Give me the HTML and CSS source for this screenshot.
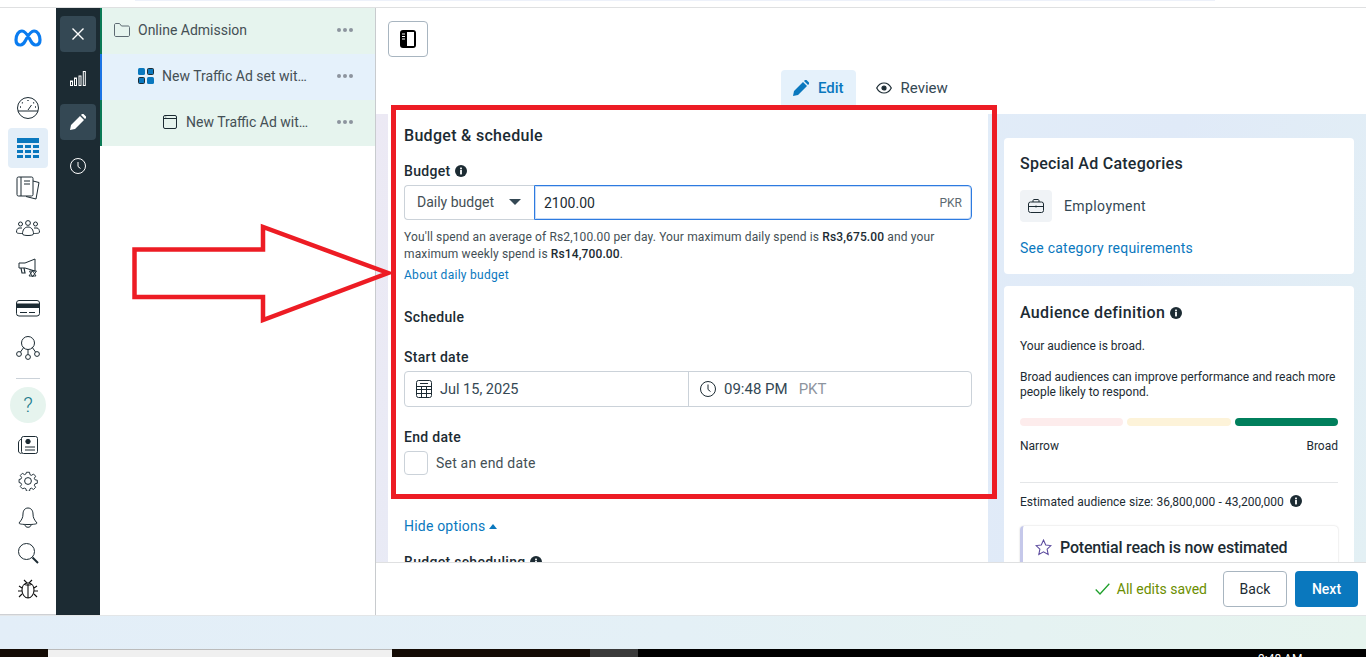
FILE: index.html
```html
<!DOCTYPE html>
<html>
<head>
<meta charset="UTF-8">
<title>Ads Manager - Edit</title>
<link rel="stylesheet" href="styles.css">
</head>
<body>
<svg class="sprite" width="0" height="0">
    <symbol id="info" viewBox="0 0 12 12">
        <circle cx="6" cy="6" r="6" fill="#1c2b33"/>
        <rect x="5.1" y="5" width="1.8" height="4.4" fill="#fff"/>
        <rect x="5.1" y="2.6" width="1.8" height="1.7" fill="#fff"/>
    </symbol>
</svg>

<div class="topline"></div>

<div class="app">
    <nav class="rail">
        <svg class="logo" width="28" height="18" viewBox="0 0 28 18" fill="none"><path d="M2 11C2 6 4.500 2 8 2c4 0 6.500 6 8.500 9.500C18 14.500 19.500 16 21.500 16 24.500 16 26 14 26 11 26 6 23.500 2 20 2c-4 0-6.500 6-8.500 9.500C10 14.500 8.500 16 6.500 16 3.500 16 2 14 2 11Z" stroke="#0a7cf0" stroke-width="3.200"/></svg>
        <div class="rail-slot">
            <svg width="24" height="24" viewBox="0 0 24 24" fill="none" stroke="#1c2b33" stroke-width="1"><circle cx="12" cy="12" r="10.500"/><path d="M2 15h20M12 14l3.500-5"/><path d="M12 4v1M6 6.500l.7.7M18 6.500l-.7.7M4 11h1M19 11h1" stroke-width="1.300"/></svg>
        </div>
        <div class="rail-slot rail-active">
            <svg width="24" height="21" viewBox="0 0 24 21" fill="#0a78be"><rect width="22" height="5" x="1"/><rect y="7" x="1" width="6" height="3"/><rect y="7" x="9" width="6" height="3"/><rect y="7" x="17" width="6" height="3"/><rect y="12" x="1" width="6" height="3"/><rect y="12" x="9" width="6" height="3"/><rect y="12" x="17" width="6" height="3"/><rect y="17" x="1" width="6" height="3"/><rect y="17" x="9" width="6" height="3"/><rect y="17" x="17" width="6" height="3"/></svg>
        </div>
        <div class="rail-slot">
            <svg width="24" height="24" viewBox="0 0 24 24" fill="none" stroke="#1c2b33" stroke-width="1"><rect x="1" y="1" width="16" height="19" rx="1.500" fill="#fff"/><path d="M5 1v19M8 5h6M8 8h6"/><path d="M17 5l6 1.500-3 16.500-10-2.500"/></svg>
        </div>
        <div class="rail-slot">
            <svg width="24" height="16" viewBox="0 0 24 16" fill="none" stroke="#1c2b33" stroke-width="1"><circle cx="12" cy="3" r="2.400"/><circle cx="4.500" cy="4" r="2"/><circle cx="19.500" cy="4" r="2"/><path d="M6.500 14c0-4 2-7 5.500-7s5.500 3 5.500 7c0 2-11 2-11 0Z"/><path d="M6 8H3c-1.500 0-2.500 2-2.500 4 0 1.500 3 1.500 6 1.500M18 8h3c1.500 0 2.500 2 2.500 4 0 1.500-3 1.500-6 1.500"/></svg>
        </div>
        <div class="rail-slot">
            <svg width="20" height="20" viewBox="0 0 20 20" fill="none" stroke="#1c2b33" stroke-width="1"><path d="M17 1v12L7 10H1V5h6Z"/><path d="M3 10l1 5h3l-1-5" stroke-width="1.200"/><path d="M14 12l4 6h-7l4-6M14.500 19l4-6h-7l3 6" stroke-width=".9"/></svg>
        </div>
        <div class="rail-slot">
            <svg width="24" height="17" viewBox="0 0 24 17" fill="none" stroke="#1c2b33" stroke-width="1"><rect x=".5" y=".5" width="23" height="15.500" rx="2.500"/><rect x=".5" y="4" width="23" height="3.500" fill="#1c2b33"/><path d="M4 12.500h7M13 12.500h6"/></svg>
        </div>
        <div class="rail-slot">
            <svg width="24" height="24" viewBox="0 0 24 24" fill="none" stroke="#1c2b33" stroke-width="1"><circle cx="12" cy="7" r="6.500"/><path d="M12 13.500v5M8 11l-3.500 5M16 11l3.500 5"/><circle cx="3" cy="18" r="2.400"/><circle cx="12" cy="21" r="2.400"/><circle cx="21" cy="18" r="2.400"/></svg>
        </div>
        <hr class="rail-rule">
        <div class="rail-help">?</div>
        <div class="rail-tool rail-tool-first">
            <svg width="20" height="18" viewBox="0 0 20 18" fill="none" stroke="#1c2b33" stroke-width="1"><rect x="3.500" y=".5" width="16" height="17" rx="2"/><circle cx="10" cy="5.500" r="2.200" fill="#1c2b33"/><path d="M7 11h10M7 14h10M3.500 3C1.500 4 .5 5 .5 7v8c0 1.500 1.500 2.500 3 2.500"/></svg>
        </div>
        <div class="rail-tool">
            <svg width="20" height="20" viewBox="0 0 20 20" fill="none" stroke="#1c2b33" stroke-width="1"><circle cx="10" cy="10" r="3.400"/><path d="M8.400 .7h3.200l.5 2.600 1.500.7 2.300-1.400 2.200 2.300-1.400 2.200.7 1.600 2.500.5v3.200l-2.500.6-.7 1.500 1.400 2.200-2.200 2.300-2.300-1.400-1.500.7-.5 2.600H8.400l-.6-2.600-1.500-.7L4 18.200l-2.200-2.300 1.400-2.200-.7-1.500-2-.6V8.400l2-.5.700-1.600-1.400-2.200L4 1.800l2.300 1.400 1.500-.7Z" transform="translate(.6 .6) scale(.94)"/></svg>
        </div>
        <div class="rail-tool">
            <svg width="20" height="21" viewBox="0 0 20 21" fill="none" stroke="#1c2b33" stroke-width="1"><path d="M10 1c-3.500 0-5 3-5 6 0 4-1.500 6-4 9 0 1 3 1.500 9 1.500s9-.5 9-1.500c-2.500-3-4-5-4-9 0-3-1.500-6-5-6Z"/><path d="M7 18c0 3 6 3 6 0"/></svg>
        </div>
        <div class="rail-tool">
            <svg width="21" height="21" viewBox="0 0 21 21" fill="none" stroke="#1c2b33" stroke-width="1"><circle cx="8.500" cy="8.500" r="8"/><path d="M14.500 14.500l5.500 5.500" stroke-width="2"/></svg>
        </div>
        <div class="rail-tool">
            <svg width="20" height="20" viewBox="0 0 20 20" fill="none" stroke="#111" stroke-width="1.100"><path d="M10 4c-4 0-6 3-6 7s2.500 8 6 8 6-4 6-8-2-7-6-7ZM10 5v14M6 5c1 1.500 7 1.500 8 0M6 1l3 3M14 1l-3 3M1 7l3 2M19 7l-3 2M0 12h4M20 12h-4M1 18l3-3M19 18l-3-3"/></svg>
        </div>
    </nav>

    <div class="steps">
        <div class="step-btn step-on">
            <svg width="14" height="14" viewBox="0 0 14 14" stroke="#fff" stroke-width="1.400"><path d="M1.500 1.500l11 11M12.500 1.500l-11 11"/></svg>
        </div>
        <div class="step-btn">
            <svg width="16" height="15" viewBox="0 0 16 15" fill="none" stroke="#fff" stroke-width="1"><rect x=".5" y="10" width="2" height="4.500"/><rect x="4.500" y="7" width="2" height="7.500"/><rect x="9" y="5" width="2" height="9.500"/><rect x="13.300" y=".5" width="2" height="14"/></svg>
        </div>
        <div class="step-btn step-on">
            <svg width="16" height="16" viewBox="0 0 16 16" fill="#fff"><path d="M0 16l1-5L10 2l4 4-9 9ZM11 1l1-1c.5-.4 1-.4 1.500 0l2.500 2.500c.4.500.4 1 0 1.500l-1 1Z"/></svg>
        </div>
        <div class="step-btn">
            <svg width="16" height="16" viewBox="0 0 16 16" fill="none" stroke="#fff" stroke-width="1"><circle cx="8" cy="8" r="7.500"/><path d="M8 4v4.500l2.500 2"/></svg>
        </div>
    </div>

    <aside class="tree">
        <div class="tree-row row-campaign">
            <svg width="16" height="14" viewBox="0 0 16 14" fill="none" stroke="#5d6a72" stroke-width="1"><path d="M.5 12V2c0-1 .5-1.500 1.500-1.500h3.500L7.500 3H14c1 0 1.500.5 1.500 1.500V12c0 1-.5 1.500-1.500 1.500H2C1 13.500.5 13 .5 12Z"/></svg>
            <span class="tree-name">Online Admission</span>
            <span class="tree-dots"><i></i><i></i><i></i></span>
        </div>
        <div class="tree-row row-adset">
            <svg width="16" height="16" viewBox="0 0 16 16"><rect width="7" height="7" rx="1.500" fill="#0a78be"/><rect x="9.500" y=".5" width="6" height="6" rx="1" fill="#0a78be" stroke="#1c2b33"/><rect x=".5" y="9.500" width="6" height="6" rx="1" fill="#0a78be" stroke="#1c2b33"/><rect x="9" y="9" width="7" height="7" rx="1.500" fill="#0a78be"/></svg>
            <span class="tree-name">New Traffic Ad set wit…</span>
            <span class="tree-dots"><i></i><i></i><i></i></span>
        </div>
        <div class="tree-row row-ad">
            <svg width="14" height="14" viewBox="0 0 14 14" fill="none" stroke="#1c2b33" stroke-width="1"><rect x=".5" y=".5" width="13" height="13" rx="1.500"/><path d="M.5 3.500h13M2.500 2h.7"/></svg>
            <span class="tree-name">New Traffic Ad wit…</span>
            <span class="tree-dots"><i></i><i></i><i></i></span>
        </div>
    </aside>

    <main class="main">
        <header class="main-head">
            <button class="panel-btn">
                <svg width="16" height="18" viewBox="0 0 16 18"><rect width="16" height="18" rx="3" fill="#000"/><rect x="7" y="2" width="7" height="14" fill="#fff"/><path d="M2 4h3M2 6.500h3M2 9h3" stroke="#fff"/></svg>
            </button>
            <div class="tabs">
                <div class="tab tab-on">
                    <svg width="16" height="16" viewBox="0 0 16 16" fill="#0a78be"><path d="M0 16l1-5L10 2l4 4-9 9ZM11 1l1-1c.5-.4 1-.4 1.500 0l2.500 2.500c.4.500.4 1 0 1.500l-1 1Z"/></svg>
                    Edit
                </div>
                <div class="tab">
                    <svg width="16" height="12" viewBox="0 0 16 12" fill="none" stroke="#1c2b33" stroke-width="1.200"><path d="M.7 6C2.500 2.500 5 1 8 1s5.500 1.500 7.300 5C13.500 9.500 11 11 8 11S2.500 9.500.7 6Z"/><circle cx="8" cy="6" r="2" fill="#1c2b33"/></svg>
                    Review
                </div>
            </div>
        </header>

        <div class="main-body">
            <section class="card-form">
                <h2 class="form-title">Budget &amp; schedule</h2>
                <div class="label label-budget">Budget <svg width="12" height="12"><use href="#info"/></svg></div>
                <div class="budget-field">
                    <div class="budget-select">Daily budget <span class="caret"></span></div>
                    <div class="budget-input"><span>2100.00</span><span class="pkr">PKR</span></div>
                </div>
                <p class="help">You'll spend an average of Rs2,100.00 per day. Your maximum daily spend is <b>Rs3,675.00</b> and your maximum weekly spend is <b>Rs14,700.00</b>.</p>
                <a class="help-link">About daily budget</a>

                <div class="label label-schedule">Schedule</div>
                <div class="label label-start">Start date</div>
                <div class="date-field">
                    <div class="date-cell date-left">
                        <svg width="16" height="18" viewBox="0 0 16 18" fill="none" stroke="#1c2b33" stroke-width="1"><rect x=".5" y=".5" width="15" height="17" rx="2"/><path d="M.5 6.500h15M.5 9.500h15M.5 13.500h15M5.500 6.500v11M10.500 6.500v11M4 3.500h8"/></svg>
                        Jul 15, 2025
                    </div>
                    <div class="date-cell">
                        <svg width="16" height="16" viewBox="0 0 16 16" fill="none" stroke="#1c2b33" stroke-width="1"><circle cx="8" cy="8" r="7.500"/><path d="M8 3.500V8.500l2.500 2"/></svg>
                        09:48 PM <span class="tz">PKT</span>
                    </div>
                </div>
                <div class="label label-end">End date</div>
                <label class="end-check"><span class="box"></span>Set an end date</label>
                <hr class="form-rule">
                <a class="hide-link">Hide options <span class="caret-up"></span></a>
                <div class="label label-scheduling">Budget scheduling <svg width="12" height="12"><use href="#info"/></svg></div>
            </section>

            <div class="side">
                <section class="card-side card-cat">
                    <h3 class="side-title">Special Ad Categories</h3>
                    <div class="cat-row">
                        <span class="cat-tile">
                            <svg width="16" height="14" viewBox="0 0 16 14" fill="none" stroke="#1c2b33" stroke-width="1"><rect x=".5" y="3" width="15" height="10.500" rx="2"/><path d="M5 3V1.500C5 1 5.500.5 6 .5h4c.5 0 1 .5 1 1V3M.5 7.500h15M8 6.500v2"/></svg>
                        </span>
                        Employment
                    </div>
                    <a class="side-link">See category requirements</a>
                </section>
                <section class="card-side card-aud">
                    <h3 class="side-title">Audience definition <svg width="12" height="12"><use href="#info"/></svg></h3>
                    <p class="aud-text">Your audience is broad.</p>
                    <p class="aud-text aud-gap">Broad audiences can improve performance and reach more people likely to respond.</p>
                    <div class="meter"><span class="m-red"></span><span class="m-yellow"></span><span class="m-green"></span></div>
                    <div class="meter-labels"><span>Narrow</span><span>Broad</span></div>
                    <hr class="side-rule">
                    <div class="estimate">Estimated audience size: 36,800,000 - 43,200,000 <svg width="12" height="12"><use href="#info"/></svg></div>
                    <div class="reach">
                        <svg width="17" height="17" viewBox="0 0 16 16" fill="none" stroke="#5b4a9e" stroke-width="1"><path d="M8 1l2.100 4.600 4.900.6-3.600 3.400 1 5L8 12.100 3.600 14.600l1-5L1 6.200l4.900-.6Z"/></svg>
                        <div>
                            <div class="reach-title">Potential reach is now estimated</div>
                            <div class="reach-text">using estimated audience size</div>
                        </div>
                    </div>
                </section>
            </div>
        </div>

        <footer class="main-foot">
            <span class="saved">
                <svg width="15" height="12" viewBox="0 0 15 12" fill="none" stroke="#1fa02c" stroke-width="1.300"><path d="M.7 6.500l4.300 4.500L14.300.7"/></svg>
                All edits saved
            </span>
            <button class="btn btn-back">Back</button>
            <button class="btn btn-next">Next</button>
        </footer>
    </main>
</div>

<div class="bottom-band"></div>

<div class="taskbar">
    <span class="tb-start"></span>
    <span class="tb-search"></span>
    <span class="tb-apps"></span>
    <span class="tb-app-on"></span>
    <span class="tb-tray"><span class="tb-clock">9:48 AM</span></span>
</div>

<!-- red marker drawn on top of the screenshot -->
<svg class="markup" width="1366" height="657" viewBox="0 0 1366 657" fill="none" stroke="#ed1c24" stroke-width="5">
    <rect x="393.500" y="107.500" width="601" height="389"/>
    <path d="M134.500 249.500H263V227L388 273 263 320V297H134.500Z" stroke-width="4.500"/>
</svg>
</body>
</html>
```

FILE: styles.css
```css
* {
    box-sizing: border-box;
}
body {
    margin: 0;
    height: 657px;
    overflow: hidden;
    font-family: Roboto, "Liberation Sans", sans-serif;
    color: #1c2b33;
    background: #fff;
}
a {
    color: #0a78be;
}
.sprite {
    position: absolute;
}
.topline {
    height: 8px;
    border-bottom: 1px solid #dfe0e1;
}
.topline::before {
    content: "";
    display: block;
    width: 1080px;
    height: 1px;
    margin-left: 135px;
    background: #edf1fa;
}

.app {
    display: flex;
    height: 607px;
}

/* far left icon rail */
.rail {
    width: 56px;
    flex: none;
    display: flex;
    flex-direction: column;
    align-items: center;
    padding-top: 21px;
    border-bottom: 1px solid #ced0d4;
}
.logo {
    flex: none;
    margin: 0 0 41px;
}
.rail-slot {
    width: 40px;
    height: 40px;
    flex: none;
    display: flex;
    align-items: center;
    justify-content: center;
    border-radius: 4px;
}
.rail-active {
    background: #e3eef8;
}
.rail-rule {
    width: 24px;
    margin: 10px 0 8px;
    border: 0;
    border-top: 1px solid #cbd2d9;
}
.rail-help {
    width: 36px;
    height: 36px;
    flex: none;
    border-radius: 50%;
    background: #e6f4ee;
    color: #1a7a8c;
    font-size: 21px;
    font-weight: 300;
    line-height: 36px;
    text-align: center;
}
.rail-tool {
    width: 36px;
    height: 36px;
    flex: none;
    display: flex;
    align-items: center;
    justify-content: center;
}
.rail-tool-first {
    margin-top: 4px;
}

/* dark step column */
.steps {
    width: 44px;
    flex: none;
    background: #1c2b33;
    display: flex;
    flex-direction: column;
    align-items: center;
    gap: 8px;
    padding-top: 8px;
}
.step-btn {
    width: 36px;
    height: 36px;
    border-radius: 4px;
    display: flex;
    align-items: center;
    justify-content: center;
}
.step-on {
    background: #344854;
}

/* campaign tree */
.tree {
    width: 276px;
    flex: none;
    border-right: 1px solid #c8cbce;
}
.tree-row {
    height: 46px;
    display: flex;
    align-items: center;
    border-left: 2px solid;
    padding-right: 22px;
    padding-bottom: 2px;
    font-size: 14px;
    color: #444f55;
}
.row-campaign {
    background: #e6f4ee;
    border-color: #0a7a55;
    padding-left: 12px;
}
.row-adset {
    background: #e5f1fb;
    border-color: #1b74e4;
    padding-left: 36px;
}
.row-ad {
    background: #e6f4ee;
    border-color: #0a7a55;
    padding-left: 61px;
}
.tree-name {
    flex: 1;
    margin-left: 8px;
    white-space: nowrap;
}
.row-ad .tree-name {
    margin-left: 9px;
}
.tree-dots {
    display: flex;
    gap: 2px;
}
.tree-dots i {
    width: 4px;
    height: 4px;
    border-radius: 50%;
    background: #8d949e;
}

/* main area */
.main {
    flex: 1;
    min-width: 0;
    display: flex;
    flex-direction: column;
}
.main-head {
    height: 106px;
    flex: none;
    padding: 13px 12px 0;
}
.panel-btn {
    display: flex;
    align-items: center;
    justify-content: center;
    width: 40px;
    height: 36px;
    padding: 0;
    background: #fff;
    border: 1px solid #a8b5c0;
    border-radius: 4px;
}
.tabs {
    display: flex;
    margin: 13px 0 0 393px;
}
.tab {
    height: 36px;
    display: flex;
    align-items: center;
    gap: 9px;
    padding: 0 12px;
    margin-right: 8px;
    font-size: 15px;
    color: #344854;
}
.tab-on {
    background: #e5f1fb;
    color: #0a78be;
    font-weight: 500;
    border-radius: 4px 4px 0 0;
}

.main-body {
    flex: 1;
    min-height: 0;
    overflow: hidden;
    display: flex;
    gap: 16px;
    padding: 0 12px;
    background: linear-gradient(110deg, #ece9f4 0%, #e2edf8 45%, #e0eaf8 70%, #e3f0f4 100%);
}

.card-form {
    width: 600px;
    flex: none;
    background: #fff;
    padding: 12px 16px 0;
}
.form-title {
    margin: 0;
    font-size: 16px;
    line-height: 20px;
    font-weight: 500;
    letter-spacing: 0.3px;
    color: #1c2b33;
}
.label {
    font-size: 14px;
    line-height: 18px;
    font-weight: 500;
    letter-spacing: 0.3px;
    color: #1c2b33;
}
.label svg {
    vertical-align: -1px;
    margin-left: 1px;
}
.label-budget {
    margin-top: 16px;
}
.budget-field {
    display: flex;
    height: 35px;
    margin-top: 5px;
}
.budget-select {
    width: 130px;
    flex: none;
    display: flex;
    align-items: center;
    padding: 0 0 1px 12px;
    border: 1px solid #cbd2d9;
    border-right: 0;
    border-radius: 4px 0 0 4px;
    font-size: 14px;
    color: #444f55;
}
.caret {
    width: 0;
    height: 0;
    margin-left: 15px;
    border-left: 6px solid transparent;
    border-right: 6px solid transparent;
    border-top: 6px solid #344854;
}
.budget-input {
    flex: 1;
    display: flex;
    align-items: center;
    justify-content: space-between;
    padding: 0 9px;
    border: 1px solid #2d7be0;
    box-shadow: inset 0 0 0 1px #c9dcf7;
    border-radius: 0 4px 4px 0;
    font-size: 14px;
    color: #1c2b33;
}
.pkr {
    font-size: 12px;
    color: #5d6a72;
}
.help {
    margin: 9px 0 0;
    font-size: 12px;
    line-height: 17px;
    letter-spacing: 0.13px;
    color: #444f55;
}
.help b {
    font-weight: 500;
    color: #1c2b33;
}
.help-link {
    display: block;
    margin-top: 4px;
    font-size: 12px;
    line-height: 17px;
    letter-spacing: 0.28px;
}
.label-schedule {
    margin-top: 24px;
}
.label-start {
    margin-top: 22px;
}
.date-field {
    display: flex;
    height: 36px;
    margin-top: 5px;
    border: 1px solid #cbd2d9;
    border-radius: 4px;
}
.date-cell {
    flex: 1;
    display: flex;
    align-items: center;
    gap: 8px;
    padding-left: 11px;
    font-size: 15px;
    color: #344854;
}
.date-left {
    flex: none;
    width: 284px;
    font-size: 14.5px;
    border-right: 1px solid #cbd2d9;
}
.tz {
    margin-left: 3px;
    color: #8d949e;
}
.label-end {
    margin-top: 21px;
}
.end-check {
    display: flex;
    align-items: center;
    gap: 8px;
    margin-top: 5px;
    font-size: 14px;
    letter-spacing: 0.2px;
    color: #444f55;
}
.box {
    width: 24px;
    height: 24px;
    border: 1px solid #cbd2d9;
    border-radius: 4px;
}
.form-rule {
    margin: 23px 0 0;
    border: 0;
    border-top: 1px solid #dfe0e1;
}
.hide-link {
    display: flex;
    align-items: center;
    gap: 4px;
    margin-top: 18px;
    font-size: 14px;
    line-height: 18px;
    letter-spacing: 0.2px;
}
.caret-up {
    width: 0;
    height: 0;
    border-left: 4px solid transparent;
    border-right: 4px solid transparent;
    border-bottom: 5px solid #0a78be;
}
.label-scheduling {
    margin-top: 18px;
}

/* right column */
.side {
    width: 350px;
    flex: none;
    padding-top: 24px;
    display: flex;
    flex-direction: column;
    gap: 12px;
}
.card-side {
    flex: none;
    background: #fff;
    border-radius: 4px;
    padding: 16px;
}
.card-cat {
    height: 136px;
}
.side-title {
    margin: 0;
    font-size: 16px;
    line-height: 20px;
    font-weight: 500;
    letter-spacing: 0.25px;
    color: #1c2b33;
}
.side-title svg {
    vertical-align: -1px;
}
.cat-row {
    display: flex;
    align-items: center;
    gap: 12px;
    margin-top: 16px;
    font-size: 14px;
    letter-spacing: 0.4px;
    color: #344854;
}
.cat-tile {
    width: 32px;
    height: 32px;
    display: flex;
    align-items: center;
    justify-content: center;
    background: #f0f3f6;
    border-radius: 4px;
}
.side-link {
    display: block;
    margin-top: 17px;
    font-size: 14px;
    line-height: 18px;
    letter-spacing: 0.25px;
}
.card-aud {
    padding-top: 17px;
}
.card-aud .side-title {
    letter-spacing: 0.35px;
}
.aud-text {
    margin: 16px 0 0;
    font-size: 12px;
    line-height: 15px;
    color: #1c2b33;
}
.aud-gap {
    margin-top: 16px;
}
.meter {
    display: flex;
    gap: 4px;
    margin-top: 18px;
}
.meter span {
    flex: 1;
    height: 8px;
    border-radius: 4px;
}
.m-red {
    background: #fdecec;
}
.m-yellow {
    background: #fdf3d9;
}
.m-green {
    background: #007f5c;
}
.meter-labels {
    display: flex;
    justify-content: space-between;
    margin-top: 12px;
    font-size: 12px;
    line-height: 16px;
}
.side-rule {
    margin: 28px 0 0;
    border: 0;
    border-top: 1px solid #e4e6e8;
}
.estimate {
    margin-top: 11px;
    font-size: 12px;
    line-height: 16px;
    word-spacing: 0.3px;
}
.estimate svg {
    vertical-align: -1px;
    margin-left: 3px;
}
.reach {
    display: flex;
    gap: 8px;
    margin-top: 16px;
    padding: 12px;
    border-left: 3px solid #c5c8ea;
    border-radius: 4px;
    box-shadow: 0 0 2px rgba(0, 0, 0, 0.2);
}
.reach svg {
    flex: none;
    margin-top: 1px;
}
.reach-title {
    font-size: 16px;
    line-height: 20px;
    font-weight: 500;
    letter-spacing: -0.2px;
}
.reach-text {
    margin-top: 4px;
    font-size: 12px;
    line-height: 16px;
}

.main-foot {
    height: 53px;
    flex: none;
    background: #fff;
    border-top: 1px solid #dfe0e1;
    display: flex;
    align-items: center;
    justify-content: flex-end;
    padding-right: 8px;
}
.saved {
    display: flex;
    align-items: center;
    gap: 7px;
    margin-right: 16px;
    font-size: 14px;
    color: #6b8e00;
}
.btn {
    height: 36px;
    border-radius: 4px;
    font-family: inherit;
    font-size: 14px;
    padding: 0;
}
.btn-back {
    width: 64px;
    background: #fff;
    border: 1px solid #a8b5c0;
    color: #1c2b33;
    margin-right: 8px;
}
.btn-next {
    width: 63px;
    background: #0a78be;
    border: 0;
    color: #fff;
    font-weight: 500;
}

.bottom-band {
    height: 34px;
    border-top: 1px solid #e3e6e8;
    background: linear-gradient(90deg, #e3eef8 0%, #e4f0f6 50%, #e6f4ee 100%);
}
.taskbar {
    height: 8px;
    display: flex;
    overflow: hidden;
    background: #000;
}
.taskbar span {
    display: block;
    height: 8px;
}
.tb-start {
    width: 48px;
    background: #140b05;
}
.tb-search {
    width: 344px;
    background: #f0f0f0;
    border-top: 1px solid #bbb;
}
.tb-apps {
    width: 198px;
    background: #140b05;
}
.tb-app-on {
    width: 48px;
    background: #3a3a3a;
}
.tb-tray {
    flex: 1;
}
.tb-clock {
    padding-left: 620px;
    padding-top: 3px;
    font-size: 12px;
    line-height: 14px;
    color: #fff;
    white-space: nowrap;
}

.markup {
    position: absolute;
    top: 0;
    left: 0;
    pointer-events: none;
}
```
